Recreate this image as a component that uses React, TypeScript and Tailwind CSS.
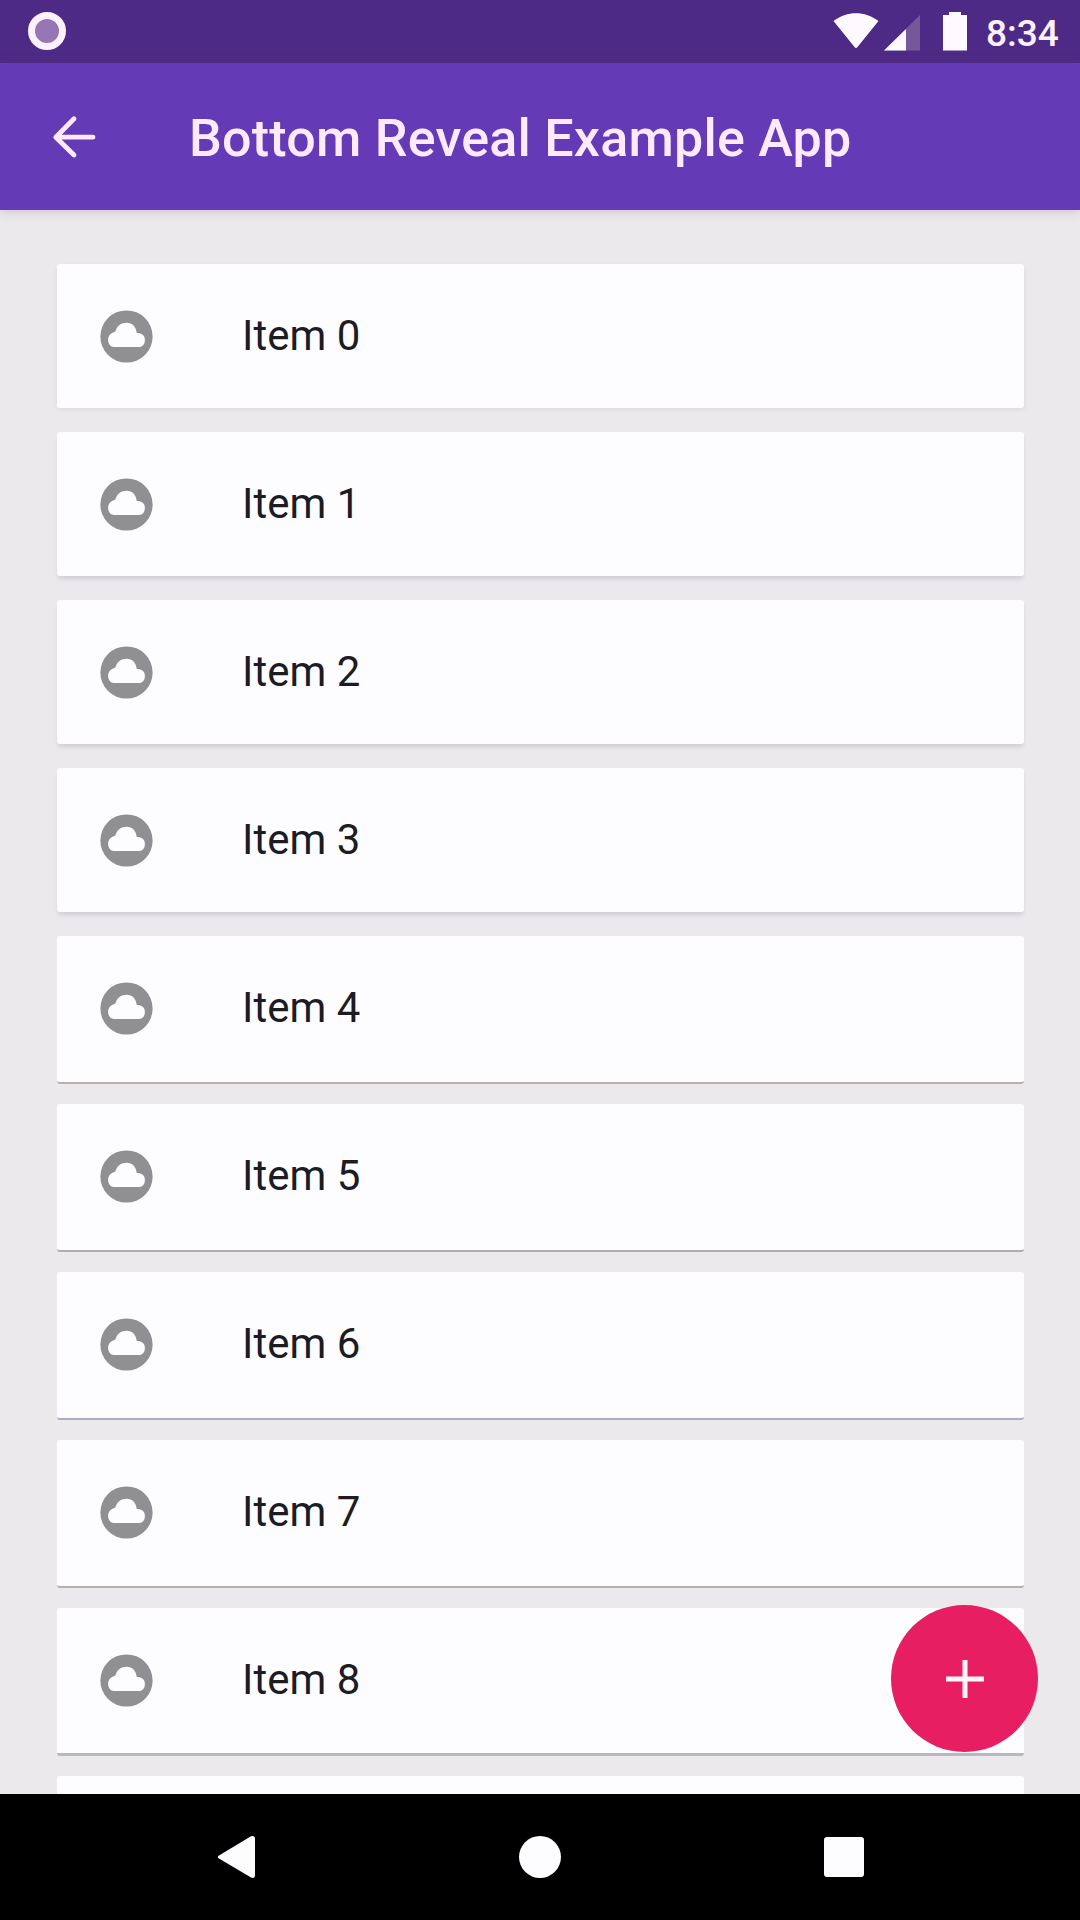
const items = [0, 1, 2, 3, 4, 5, 6, 7, 8];

const cardEdges = [
  'h-[144px] shadow-[0_2px_4px_rgba(80,80,90,0.08)]',
  'h-[144px] shadow-[0_4px_4px_-1px_rgba(90,90,105,0.18)]',
  'h-[144px] shadow-[0_4px_4px_-1px_rgba(90,90,105,0.18)]',
  'h-[144px] shadow-[0_4px_4px_-1px_rgba(90,90,105,0.18)]',
  'h-[148px] border-b-2 border-[#b4b2ab]',
  'h-[148px] border-b-2 border-[#acaeb2]',
  'h-[148px] border-b-2 border-[#acacc4]',
  'h-[148px] border-b-2 border-[#b2b1ac]',
  'h-[148px] border-b-3 border-[#b8b8c2]',
];

function StatusBar() {
  return (
    <div className="flex h-[63px] shrink-0 items-start bg-[#4c2a86]">
      <div className="mt-3 ml-7 size-[38px] rounded-full border-7 border-[#fdf0ff] bg-[#9477b4]" />
      <svg className="mt-3 ml-[767px] h-10 w-[46px]" viewBox="0 0 46 40" fill="#fffaff">
        <path d="M0.500 9C14 -1.500 32 -1.500 45.500 9L24.500 35Q23 37 21.500 35Z" />
      </svg>
      <svg className="mt-3 ml-1 h-10 w-[40px]" viewBox="0 0 40 40">
        <path d="M37 3V38.500H1Z" fill="#76589a" />
        <path d="M23 17V38.500H1Z" fill="#fffaff" />
      </svg>
      <svg className="mt-3 ml-[20px] h-10 w-6" viewBox="0 0 24 40" fill="#fffaff">
        <path d="M6 0H18V3H24V38.500H0V3H6Z" />
      </svg>
      <span className="mt-[13px] ml-[19px] text-[37px] leading-[42px] font-medium whitespace-nowrap text-[#fdf0ff]">8:34</span>
    </div>
  );
}

function AppBar() {
  return (
    <header className="z-10 flex h-[147px] shrink-0 items-center bg-[#653ab7] shadow-[0_1px_10px_rgba(120,60,130,0.25)]">
      <svg className="ml-[50px] h-12 w-12" viewBox="0 0 48 48" fill="none" stroke="#fdeaff" strokeWidth="4.800" strokeLinecap="round" strokeLinejoin="round">
        <path d="M43 24.200H6M24 5.800L5.800 24.200L24 42" />
      </svg>
      <h1 className="mt-[5px] ml-[91px] text-[52px] leading-[62px] font-medium tracking-[0.24px] whitespace-nowrap text-[#fdeaff]">
        Bottom Reveal Example App
      </h1>
    </header>
  );
}

function CloudCircle() {
  return (
    <svg className="ml-[38px] size-[63px]" viewBox="0 0 24 24">
      <circle cx="12" cy="12" r="9.950" fill="#8f8f94" />
      <path
        d="M7.400 16C6 16 5 14.900 5 13.300C5 11.400 6.300 10.600 7.700 10.200C8.400 8 9.900 6.800 12 6.800C14.200 6.800 15.700 8.300 15.900 10.700C17.800 10.700 19 11.600 19 13.300C19 14.900 18.200 16 16.600 16Z"
        fill="#fdfcff"
      />
    </svg>
  );
}

export default function App() {
  return (
    <div className="relative flex h-[1920px] w-[1080px] flex-col overflow-hidden bg-[#ebe9ec] font-['Roboto',sans-serif]">
      <StatusBar />
      <AppBar />
      <main className="flex min-h-0 flex-1 flex-col overflow-hidden pt-[54px] pr-[56px] pl-[57px]">
        {items.map((n) => (
          <div key={n} className="h-[168px] shrink-0">
            <div className={`flex items-start rounded-[3px] bg-[#fdfcff] ${cardEdges[n]}`}>
              <div className="flex h-[145px] items-center">
                <CloudCircle />
                <span className="mb-[2px] ml-[84px] text-[42px] leading-[50px] text-[#1d1c22]">Item {n}</span>
              </div>
            </div>
          </div>
        ))}
        <div className="h-36 shrink-0 rounded-[3px] bg-[#fdfcff]" />
      </main>
      <nav className="flex h-[126px] shrink-0 items-center bg-black">
        <svg className="ml-[217px] h-[44px] w-[39px]" viewBox="0 0 39 44" fill="#fdfcff">
          <path d="M2 20.500L34 1.300Q38 0 38 4V40Q38 44 34 42.500L2 23.500Q-0.500 22 2 20.500Z" />
        </svg>
        <div className="ml-[263px] size-[42px] rounded-full bg-[#fdfcff]" />
        <div className="ml-[263px] size-10 rounded-[3px] bg-[#fdfcff]" />
      </nav>
      <button className="absolute top-[1605px] left-[891px] flex size-[147px] items-center justify-center rounded-full bg-[#e81e62]" aria-label="Add">
        <svg className="size-[38px]" viewBox="0 0 38 38" stroke="#fff5fa" strokeWidth="5">
          <path d="M19 0V38M0 19H38" />
        </svg>
      </button>
    </div>
  );
}
